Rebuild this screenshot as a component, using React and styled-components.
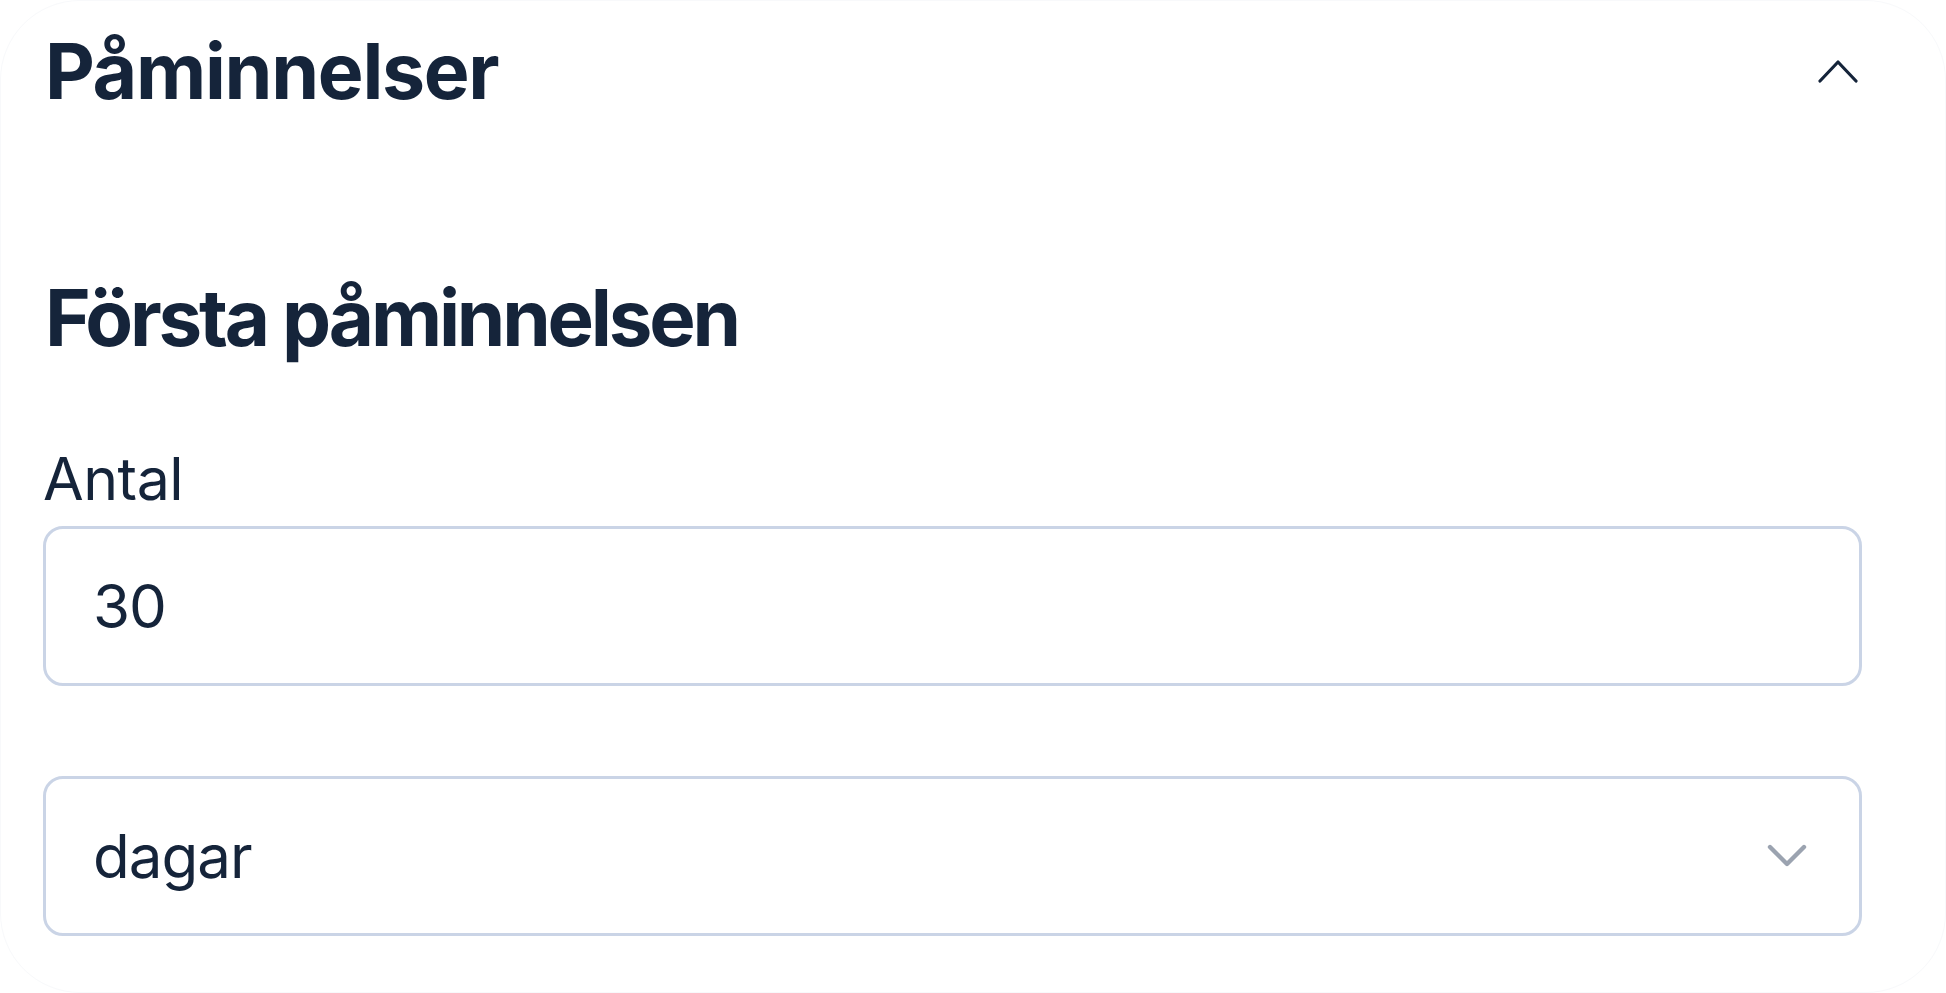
import styled, { createGlobalStyle } from "styled-components"

const GlobalStyle = createGlobalStyle`
    html, body {
        margin: 0;
        padding: 0;
        background: #ffffff;
    }
    * {
        box-sizing: border-box;
    }
`

const Card = styled.section`
    height: 993px;
    padding: 0 83px 0 42px;
    background: #ffffff;
    border: 1px solid #f8f9fb;
    border-radius: 80px;
    font-family: Inter, "Noto Sans", sans-serif;
    color: #15243a;
    display: flex;
    flex-direction: column;
`

/* accordion header: title left, toggle right */
const Header = styled.div`
    height: 140px;
    display: flex;
    align-items: center;
    justify-content: space-between;
`

const Title = styled.h2`
    margin: 0 0 0 2px;
    font-size: 77px;
    line-height: 1;
    font-weight: 700;
    letter-spacing: -1.3px;
`

const Toggle = styled.button`
    border: none;
    background: none;
    padding: 0;
    margin-right: 3px;
    display: flex;
    cursor: pointer;
    color: #15243a;
`

const SubTitle = styled.h3`
    margin: 138px 0 0 2px;
    font-size: 78px;
    line-height: 1;
    font-weight: 700;
    letter-spacing: -3.2px;
`

const Label = styled.label`
    margin-top: 92px;
    font-size: 59px;
    line-height: 1;
    font-weight: 400;
    letter-spacing: -0.5px;
`

const Field = styled.div`
    margin-top: ${props => props.$gap}px;
    height: 160px;
    border: 3px solid #cad4e6;
    border-radius: 20px;
    padding: 0 49px 0 47px;
    display: flex;
    align-items: center;
    justify-content: space-between;
    font-size: 60px;
    letter-spacing: -1px;
    color: #15243a;
`

const Value = styled.span`
    line-height: 1;
`

const ChevronUp = () => (
    <svg width="42" height="24" viewBox="0 0 42 24" fill="none">
        <polyline points="3,22 21,3 39,22" stroke="currentColor" strokeWidth="3.2" strokeLinecap="round" strokeLinejoin="round" />
    </svg>
)

const ChevronDown = () => (
    <svg width="44" height="28" viewBox="0 0 44 28" fill="none">
        <polyline points="4,5 21,22 38,5" stroke="#9ba3b0" strokeWidth="4.4" strokeLinecap="round" strokeLinejoin="round" />
    </svg>
)

const App = () => {
    return (
        <>
            <GlobalStyle />
            <Card>
                <Header>
                    <Title>Påminnelser</Title>
                    <Toggle aria-label="Stäng">
                        <ChevronUp />
                    </Toggle>
                </Header>
                <SubTitle>Första påminnelsen</SubTitle>
                <Label>Antal</Label>
                <Field $gap={18}>
                    <Value>30</Value>
                </Field>
                <Field $gap={90}>
                    <Value>dagar</Value>
                    <ChevronDown />
                </Field>
            </Card>
        </>
    )
}

export default App
